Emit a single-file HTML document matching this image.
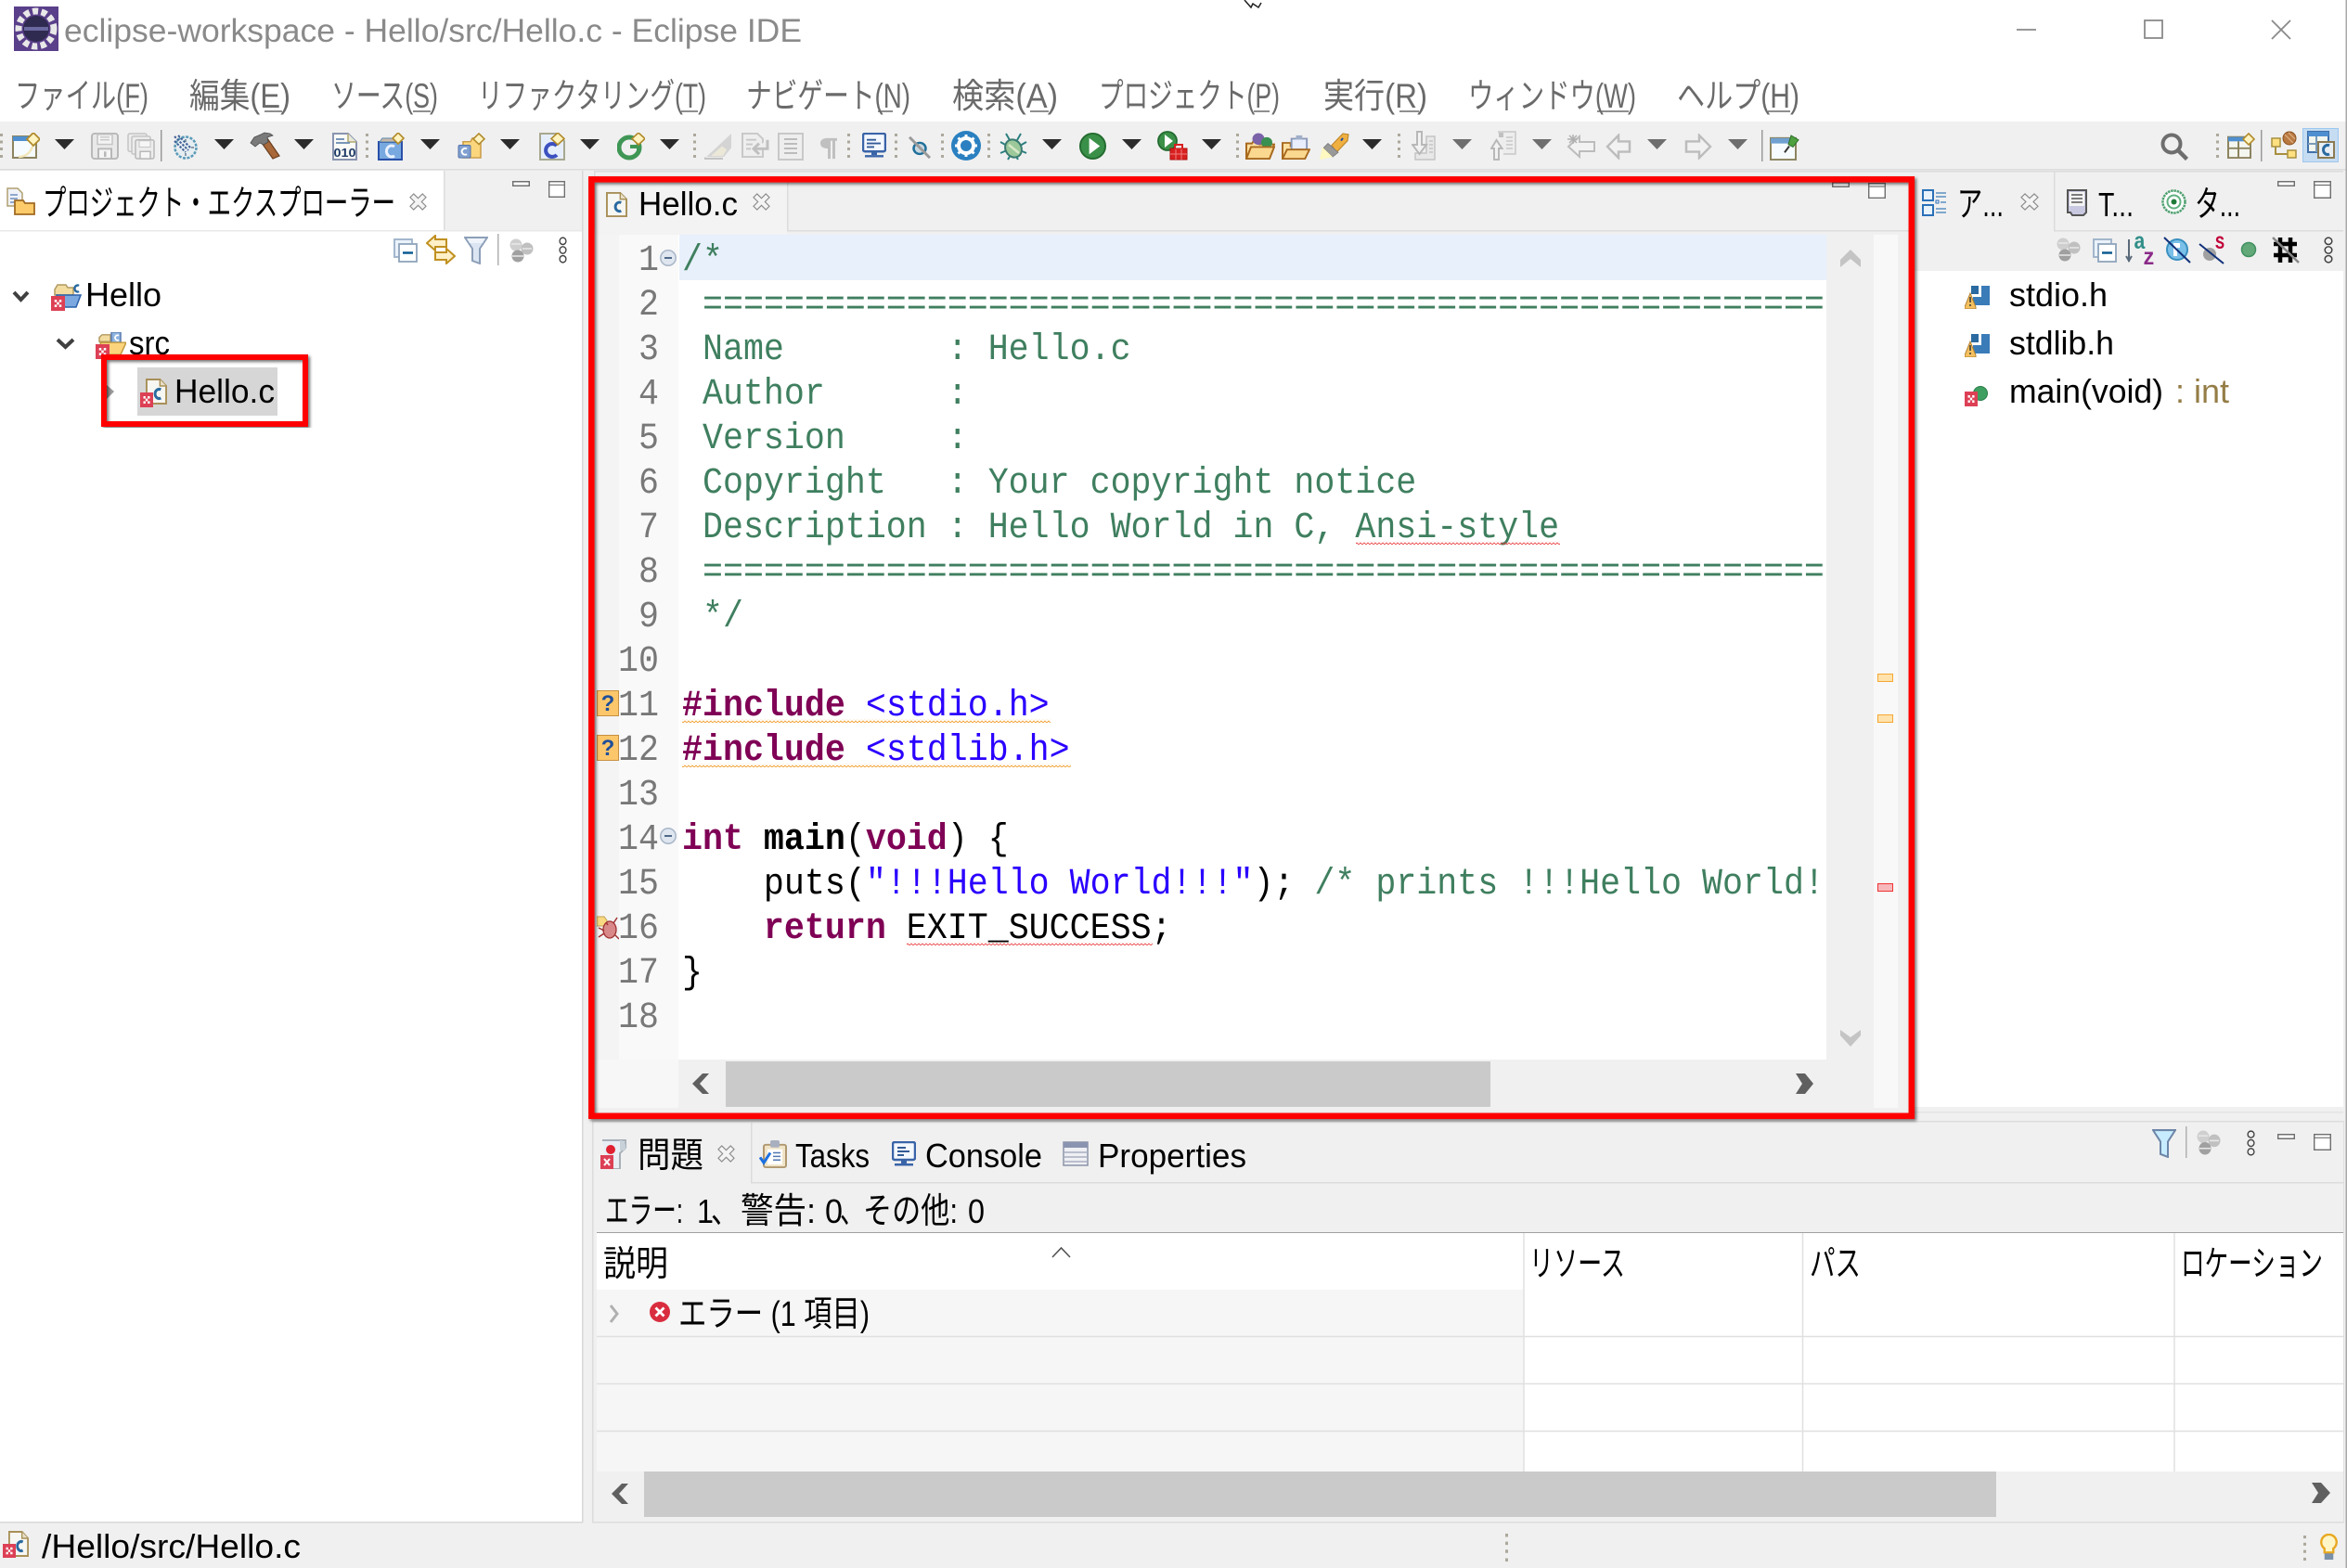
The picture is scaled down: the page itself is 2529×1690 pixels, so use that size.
<!DOCTYPE html>
<html lang="ja"><head><meta charset="utf-8"><title>eclipse-workspace - Hello/src/Hello.c - Eclipse IDE</title>
<style>
html,body{margin:0;padding:0;background:#f0f0f0}
svg{display:block}
.s{font-family:"Liberation Sans","Noto Sans CJK JP",sans-serif;font-size:36px;fill:#000}
.j{font-size:38px}
.m{font-family:"Liberation Mono","DejaVu Sans Mono",monospace;font-size:40px;white-space:pre}
.c{fill:#3f7f5f}.k{fill:#7f0055;font-weight:bold}.t{fill:#2a00ff}.b{fill:#000}.bb{fill:#000;font-weight:bold}
.menu{fill:#6a6a6a;font-size:37px}
.ln{fill:#787878;text-anchor:end}
</style></head><body>
<svg xmlns="http://www.w3.org/2000/svg" width="2529" height="1690" viewBox="0 0 2529 1690">
<defs>
<clipPath id="codeclip"><rect x="731" y="253" width="1235" height="889"/></clipPath>
<pattern id="sqo" width="4" height="4" patternUnits="userSpaceOnUse"><path d="M0 3L2 1L4 3" fill="none" stroke="#f0a030" stroke-width=".9"/></pattern>
<pattern id="sqr" width="4" height="4" patternUnits="userSpaceOnUse"><path d="M0 3L2 1L4 3" fill="none" stroke="#e83838" stroke-width=".8"/></pattern>
<filter id="sh" x="-5%" y="-5%" width="110%" height="110%"><feDropShadow dx="2" dy="2" stdDeviation="1.500" flood-color="#000" flood-opacity=".55"/></filter>
<path id="tb" d="M0 0h21l-10.500 11z" fill="#2b2b2b"/>
<path id="tg" d="M0 0h21l-10.500 11z" fill="#6e6e6e"/>
<symbol id="grip" viewBox="0 0 3 26" preserveAspectRatio="none"><path d="M0 0h3v3H0zM0 7.500h3v3H0zM0 15h3v3H0zM0 23h3v3H0z" fill="#aca89c"/></symbol>

<symbol id="i-new" viewBox="0 0 30 28" preserveAspectRatio="none"><rect x="1" y="4" width="25" height="23" fill="#f6fbff" stroke="#8c8460" stroke-width="2"/><rect x="1" y="4" width="25" height="5" fill="#4f8fd0"/><path d="M7 26c9 0 14-6 16-14" fill="none" stroke="#f2e6b8" stroke-width="2.500"/><path d="M23 0l7 7-7 7-7-7z" fill="#fff3c0" stroke="#b08a2a" stroke-width="1.800"/></symbol>
<symbol id="i-save" viewBox="0 0 30 30" preserveAspectRatio="none"><rect x="1" y="1" width="28" height="28" rx="3" fill="#e9e9e9" stroke="#b8b8b8" stroke-width="2"/><rect x="7" y="2" width="16" height="11" fill="#f3f3f3" stroke="#c4c4c4" stroke-width="1.500"/><path d="M10 5h10M10 8h10" stroke="#c8c8c8" stroke-width="1.500"/><rect x="8" y="18" width="14" height="11" fill="#f5f5f5" stroke="#b8b8b8" stroke-width="2"/><rect x="14" y="21" width="2.500" height="6" fill="#b8b8b8"/></symbol>
<symbol id="i-saveall" viewBox="0 0 30 30" preserveAspectRatio="none"><rect x="1" y="1" width="20" height="20" rx="2" fill="#ececec" stroke="#c4c4c4" stroke-width="1.500"/><rect x="5" y="4" width="20" height="20" rx="2" fill="#ececec" stroke="#c4c4c4" stroke-width="1.500"/><rect x="9" y="8" width="20" height="21" rx="2" fill="#ececec" stroke="#b8b8b8" stroke-width="1.500"/><rect x="13" y="9" width="12" height="7" fill="#f6f6f6" stroke="#c4c4c4"/><rect x="14" y="21" width="11" height="8" fill="#f6f6f6" stroke="#b8b8b8" stroke-width="1.500"/></symbol>
<symbol id="i-target" viewBox="0 0 26 28" preserveAspectRatio="none"><circle cx="13" cy="15" r="11.500" fill="#e6eef2" stroke="#5a9ab8" stroke-width="2.500" stroke-dasharray="3 1.500"/><path d="M1 3l15 15M5 2l14 14M1 8l12 12" stroke="#3e5f96" stroke-width="2" stroke-dasharray="2.500 1.500"/><path d="M13 6v3M22 15h-3M13 24v-3" stroke="#6a7f90" stroke-width="1.500"/></symbol>
<symbol id="i-hammer" viewBox="0 0 33 30" preserveAspectRatio="none"><path d="M13 12l12 17 7-3-13-19z" fill="#a9683a" stroke="#6a3f20" stroke-width="1.200"/><path d="M1 12l4-6 7-3 4-2 6 1 3 2-6 2 1 5-5 3-4-2-5 4z" fill="#7a7a7a" stroke="#4a4a4a" stroke-width=".8"/></symbol>
<symbol id="i-010" viewBox="0 0 27 30" preserveAspectRatio="none"><path d="M1 1h16l9 9v19H1z" fill="#fbfbf7" stroke="#8a94b0" stroke-width="2"/><path d="M17 1v9h9" fill="#e8e8d8" stroke="#b0a870" stroke-width="1.500"/><path d="M4 7h9M4 11h15" stroke="#6688b0" stroke-width="1.800"/><text x="1.500" y="26" font-family="Liberation Sans" font-weight="bold" font-size="13" fill="#1f3a66" textLength="24" lengthAdjust="spacingAndGlyphs">010</text></symbol>
<symbol id="i-cproj" viewBox="0 0 30 30" preserveAspectRatio="none"><path d="M1 10h25v19H1z" fill="#78a8e0" stroke="#2a50a8" stroke-width="2"/><path d="M2 10l3-4h16l3 4z" fill="#c8b8a8" stroke="#5a88b0"/><path d="M18 15a5.500 6 0 1 0 0 10" fill="none" stroke="#eaf2ff" stroke-width="3"/><path d="M22 0l6 6-6 6-6-6z" fill="#fff3c0" stroke="#b08a2a" stroke-width="1.600"/></symbol>
<symbol id="i-fold" viewBox="0 0 30 30" preserveAspectRatio="none"><path d="M6 10h8l2-4h9v22H6z" fill="#fbd67c" stroke="#c89a46" stroke-width="1.500"/><rect x="1" y="14" width="13" height="14" rx="1.500" fill="#80a0d0" stroke="#5070a8"/><path d="M10 18a3.500 3.500 0 1 0 0 6" fill="none" stroke="#fff" stroke-width="2"/><path d="M23 1l6 6-6 6-6-6z" fill="#fff3c0" stroke="#b08a2a" stroke-width="1.600"/></symbol>
<symbol id="i-cdoc" viewBox="0 0 28 30" preserveAspectRatio="none"><path d="M1 1h18l8 8v20H1z" fill="#e6eefc" stroke="#a8a890" stroke-width="2"/><path d="M19 14a7 7 0 1 0 0 10" fill="none" stroke="#3c50c0" stroke-width="4"/><path d="M20 0l7 6.500-7 6.500-7-6.500z" fill="#fff3c0" stroke="#b08a2a" stroke-width="1.600"/></symbol>
<symbol id="i-g" viewBox="0 0 30 30" preserveAspectRatio="none"><circle cx="13" cy="16" r="11" fill="none" stroke="#3f9655" stroke-width="5"/><path d="M14 15h9v4" fill="none" stroke="#3f9655" stroke-width="4"/><path d="M23 0l7 6.500-7 6.500-7-6.500z" fill="#fff3c0" stroke="#b08a2a" stroke-width="1.600"/></symbol>
<symbol id="i-gpen" viewBox="0 0 32 30" preserveAspectRatio="none"><path d="M1 29L30 1v16L22 27H1z" fill="#d4d4d4"/><path d="M8 26l12-11 5 4-4 7z" fill="#ece8d8"/><path d="M1 29h20" stroke="#b4b4b4" stroke-width="1.500"/></symbol>
<symbol id="i-gdoc" viewBox="0 0 30 28" preserveAspectRatio="none"><path d="M1 1h16l6 6v20H1z" fill="#eee" stroke="#c8c8c8" stroke-width="2"/><path d="M5 8h11M5 13h7M5 18h5" stroke="#c8c8c8" stroke-width="2"/><path d="M28 8v10H14m5-6l-6 6 6 6" fill="#eee" stroke="#c0c0c0" stroke-width="3"/></symbol>
<symbol id="i-glines" viewBox="0 0 28 30" preserveAspectRatio="none"><rect x="1" y="1" width="26" height="28" fill="#eee" stroke="#c8c8c8" stroke-width="2"/><path d="M7 7h14M7 12h14M7 17h14M7 22h14" stroke="#bcbcbc" stroke-width="2"/></symbol>
<symbol id="i-pil" viewBox="0 0 20 26" preserveAspectRatio="none"><path d="M8 1h11v3h-2v21h-3V4h-2v21H9V13C3 13 1 10 1 7c0-4 3-6 7-6z" fill="#c0c0c0"/></symbol>
<symbol id="i-mon" viewBox="0 0 26 28" preserveAspectRatio="none"><rect x="1" y="1" width="24" height="20" rx="2" fill="#f4f8ff" stroke="#3a64a8" stroke-width="2.500"/><path d="M5 8h10M5 12h15M5 16h8" stroke="#335b96" stroke-width="2"/><path d="M10 22h6v3h-6z" fill="#3a64a8"/><path d="M3 25h20v2.500H3z" fill="#3a64a8"/></symbol>
<symbol id="i-sx" viewBox="0 0 24 28" preserveAspectRatio="none"><circle cx="12" cy="15" r="6.500" fill="#c8d8e0" stroke="#1f6f9a" stroke-width="2.500"/><path d="M1 2l22 24" stroke="#9a9a9a" stroke-width="3"/></symbol>
<symbol id="i-gear" viewBox="0 0 32 32" preserveAspectRatio="none"><circle cx="16" cy="16" r="16" fill="#2a80c0"/><circle cx="16" cy="16" r="8" fill="none" stroke="#fff" stroke-width="4"/><path d="M16 4v6M16 22v6M4 16h6M22 16h6M7.500 7.500l4 4M20.500 20.500l4 4M24.500 7.500l-4 4M11.500 20.500l-4 4" stroke="#fff" stroke-width="3"/></symbol>
<symbol id="i-bug" viewBox="0 0 30 30" preserveAspectRatio="none"><path d="M7 1l4 7M23 1l-4 7M1 10l7 4M29 10l-7 4M1 22l7-3M29 22l-7-3M9 29l3-5M20 29l-3-5" stroke="#2c7f80" stroke-width="2" fill="none"/><ellipse cx="15" cy="17" rx="8.500" ry="10" fill="#9cc89a" stroke="#3a7a70" stroke-width="2" transform="rotate(-30 15 17)"/><path d="M10 13l11 9" stroke="#d8e8c8" stroke-width="2.500"/></symbol>
<symbol id="i-run" viewBox="0 0 30 30" preserveAspectRatio="none"><circle cx="15" cy="15" r="14" fill="#3a9048" stroke="#236b30" stroke-width="2"/><path d="M11 6l12 9-12 9z" fill="#fff"/></symbol>
<symbol id="i-runx" viewBox="0 0 33 32" preserveAspectRatio="none"><circle cx="11" cy="11" r="10" fill="#3a9048" stroke="#236b30" stroke-width="1.800"/><path d="M8 4l9 7-9 7z" fill="#fff"/><rect x="14" y="19" width="18" height="12" fill="#d82020" stroke="#b01010"/><rect x="19" y="15" width="8" height="5" fill="none" stroke="#d82020" stroke-width="2"/><path d="M14 25h18M20 20v11M26 20v11" stroke="#f08080" stroke-width="1"/></symbol>
<symbol id="i-f1" viewBox="0 0 32 30" preserveAspectRatio="none"><path d="M1 28V12h6l2-3h6v4h16l-5 15z" fill="#fde0a0" stroke="#a8691e" stroke-width="2"/><circle cx="14" cy="7" r="6.500" fill="#7a62a8"/><circle cx="23" cy="11" r="6" fill="#3a9050"/><path d="M1 29l5-13h25l-5 13z" fill="#fbd890" stroke="#a8691e" stroke-width="2"/></symbol>
<symbol id="i-f2" viewBox="0 0 32 30" preserveAspectRatio="none"><path d="M1 28V10h9v4h16v14z" fill="#fde0a0" stroke="#a8691e" stroke-width="2"/><rect x="11" y="5" width="17" height="13" fill="#e8eefc" stroke="#8a98b8" stroke-width="2"/><rect x="16" y="1" width="7" height="5" fill="#a0aec8"/><path d="M1 29l5-11h25l-5 11z" fill="#fbd890" stroke="#a8691e" stroke-width="2"/></symbol>
<symbol id="i-pen" viewBox="0 0 33 32" preserveAspectRatio="none"><path d="M14 15L26 2l6 1-1 7-12 13z" fill="#f0b040" stroke="#c08a30" stroke-width="1.200"/><path d="M10 13l11 10-6 5-10-10z" fill="#999" stroke="#777" stroke-width=".8"/><path d="M1 31l3-14 11 11z" fill="#fff8c0"/><path d="M24 10l2-3" stroke="#2a50a0" stroke-width="2"/></symbol>
<symbol id="i-nx" viewBox="0 0 26 32" preserveAspectRatio="none"><path d="M16 6h9v25H4v-7h12z" fill="#e8e8e8" stroke="#c4c4c4" stroke-width="1.500"/><path d="M19 11h4M19 15h4M19 19h4M19 23h4" stroke="#c4c4c4" stroke-width="1.500"/><path d="M6 1h5v14h5L8.500 25 1 15h5z" fill="#f2f2f2" stroke="#b8b8b8" stroke-width="2"/></symbol>
<symbol id="i-pv" viewBox="0 0 28 32" preserveAspectRatio="none"><path d="M8 1h19v24H14" fill="#ededed" stroke="#c8c8c8" stroke-width="1.500"/><path d="M17 7h7M17 11h7M17 15h7M17 19h7" stroke="#c8c8c8" stroke-width="1.500"/><rect x="9" y="2" width="5" height="5" fill="#c0c0c0"/><path d="M9 31h-5V19H1l5.500-9 6 9H9z" fill="#f2f2f2" stroke="#b8b8b8" stroke-width="2"/></symbol>
<symbol id="i-last" viewBox="0 0 32 28" preserveAspectRatio="none"><path d="M2 14L14 3v6h16v10H14v6z" fill="#f2f2f2" stroke="#bcbcbc" stroke-width="2"/><path d="M3 2l8 8M11 2l-8 8M7 1v10M1 6h11" stroke="#b0b0b0" stroke-width="1.500"/></symbol>
<symbol id="i-back" viewBox="0 0 28 30" preserveAspectRatio="none"><path d="M2 15L14 2v7h12v12H14v7z" fill="#f2f2f2" stroke="#bcbcbc" stroke-width="2.500"/></symbol>
<symbol id="i-fwd" viewBox="0 0 30 30" preserveAspectRatio="none"><path d="M28 15L16 2v7H2v12h14v7z" fill="#f2f2f2" stroke="#bcbcbc" stroke-width="2.500"/></symbol>
<symbol id="i-pin" viewBox="0 0 32 30" preserveAspectRatio="none"><rect x="1" y="5" width="27" height="24" fill="#f6fbff" stroke="#8c8460" stroke-width="2"/><rect x="1" y="5" width="27" height="6" fill="#6fa0d0"/><path d="M16 21l5-7" stroke="#333" stroke-width="2"/><path d="M20 12l3-10 8 5-6 8z" fill="#4ea040" stroke="#2c7028" stroke-width="1"/></symbol>
<symbol id="i-search" viewBox="0 0 30 30" preserveAspectRatio="none"><circle cx="12" cy="12" r="9.500" fill="none" stroke="#6e6e6e" stroke-width="4"/><path d="M19 19l9.500 9.500" stroke="#6e6e6e" stroke-width="4.500"/></symbol>
<symbol id="i-pers" viewBox="0 0 30 30" preserveAspectRatio="none"><rect x="1" y="5" width="24" height="24" fill="#f4f6f0" stroke="#8c8460" stroke-width="2"/><rect x="1" y="5" width="24" height="5" fill="#4f8fd0"/><path d="M1 18h24M12 10v19" stroke="#8c8460" stroke-width="2"/><path d="M23 1l6 6.500-6 6.500-6-6.500z" fill="#fff3c0" stroke="#b08a2a" stroke-width="1.600"/></symbol>
<symbol id="i-hier" viewBox="0 0 28 30" preserveAspectRatio="none"><rect x="1" y="8" width="9" height="9" fill="#ffe080" stroke="#a89040" stroke-width="1.500"/><rect x="18" y="21" width="9" height="8" fill="#ffe080" stroke="#a89040" stroke-width="1.500"/><path d="M5 17v8h13" fill="none" stroke="#a89040" stroke-width="2"/><ellipse cx="20" cy="8" rx="7" ry="7" fill="#b87840" stroke="#8a5020"/><path d="M15 4l9 9M19 2l7 7" stroke="#d8a878" stroke-width="1.500"/></symbol>
<symbol id="i-cpers" viewBox="0 0 30 30" preserveAspectRatio="none"><rect x="1" y="1" width="22" height="22" fill="#f4f6f0" stroke="#4070a8" stroke-width="2"/><rect x="1" y="1" width="22" height="5" fill="#4f8fd0"/><path d="M1 14h22M10 6v17" stroke="#7a9ab8" stroke-width="2"/><rect x="12" y="12" width="17" height="17" fill="#e8eef4" stroke="#8c7a50" stroke-width="2"/><path d="M24 16a4.500 5 0 1 0 0 9" fill="none" stroke="#2a6aa0" stroke-width="3"/></symbol>

<symbol id="x-close" viewBox="0 0 20 20" preserveAspectRatio="none"><path d="M5 1l5 5 5-5 4 4-5 5 5 5-4 4-5-5-5 5-4-4 5-5-5-5z" fill="#f4f4f4" stroke="#8a8a8a" stroke-width="1.200"/></symbol>
<symbol id="x-min" viewBox="0 0 20 6" preserveAspectRatio="none"><rect x=".75" y=".75" width="18.500" height="4.500" fill="#fff" stroke="#707070" stroke-width="1.500"/></symbol>
<symbol id="x-max" viewBox="0 0 20 19" preserveAspectRatio="none"><rect x=".75" y=".75" width="18.500" height="17.500" fill="#fff" stroke="#707070" stroke-width="1.500"/><path d="M1 4.500h18" stroke="#707070" stroke-width="1.200"/></symbol>
<symbol id="x-keb" viewBox="0 0 10 30" preserveAspectRatio="none"><circle cx="5" cy="5" r="3.800" fill="none" stroke="#404040" stroke-width="1.500"/><circle cx="5" cy="15" r="3.800" fill="none" stroke="#404040" stroke-width="1.500"/><circle cx="5" cy="25" r="3.800" fill="none" stroke="#404040" stroke-width="1.500"/></symbol>
<symbol id="x-db" viewBox="0 0 26 26" preserveAspectRatio="none"><circle cx="7" cy="7" r="6.500" fill="#cfcfcf"/><circle cx="19" cy="11" r="6.500" fill="#c0c0c0"/><circle cx="9" cy="19" r="6.500" fill="#a0a0a0"/><path d="M2 6h10M14 11h10M3 19h12" stroke="#e8e8e8" stroke-width="1.500"/></symbol>
<symbol id="x-coll" viewBox="0 0 26 26" preserveAspectRatio="none"><rect x="1" y="1" width="19" height="19" fill="#eaf2fa" stroke="#9ab0c8" stroke-width="1.800"/><rect x="6" y="6" width="19" height="19" fill="#fff" stroke="#8ea4bc" stroke-width="1.800"/><path d="M10 15.500h11" stroke="#0a5a90" stroke-width="2.500"/></symbol>
<symbol id="x-link" viewBox="0 0 32 32" preserveAspectRatio="none"><path d="M1 9l9-8v4h12v8H10v4z" fill="#fff0c8" stroke="#c09020" stroke-width="2"/><path d="M31 23l-9-8v4H10v8h12v4z" fill="#fff0c8" stroke="#c09020" stroke-width="2"/></symbol>
<symbol id="x-filt" viewBox="0 0 26 30" preserveAspectRatio="none"><path d="M1 1h24l-8 12v16l-8-3V13z" fill="#dce6f2" stroke="#8c9fb8" stroke-width="2"/><path d="M3 2h20l-3 5H6z" fill="#eef4fa"/></symbol>
<symbol id="x-filt2" viewBox="0 0 26 30" preserveAspectRatio="none"><path d="M1 1h24l-8 12v16l-8-3V13z" fill="#c8ecff" stroke="#6d86a8" stroke-width="2"/></symbol>
<symbol id="x-err" viewBox="0 0 12 12" preserveAspectRatio="none"><rect width="12" height="12" fill="#dd4055"/><path d="M3 3h2v2H3zM7 3h2v2H7zM5 5h2v2H5zM3 7h2v2H3zM7 7h2v2H7z" fill="#fff"/></symbol>
<symbol id="d-cfile" viewBox="0 0 24 28" preserveAspectRatio="none"><path d="M1 1h15l7 7v19H1z" fill="#f6f6f2" stroke="#a89058" stroke-width="2"/><path d="M16 1v7h7" fill="#e8e0c8" stroke="#a89058" stroke-width="1.500"/><path d="M17 12a4.500 5 0 1 0 0 9" fill="none" stroke="#2a6aa0" stroke-width="3"/></symbol>
<symbol id="d-proj" viewBox="0 0 32 30" preserveAspectRatio="none"><path d="M3 8l3-5h9l2 3h6v8H3z" fill="#f2dca0" stroke="#b09a60" stroke-width="1.500"/><path d="M5 14h26l-5 13H7z" fill="#7ca8e0" stroke="#2a60a8" stroke-width="1.500"/><path d="M29 4a3 3.500 0 1 0 0 6" fill="none" stroke="#2a6aa0" stroke-width="2.500"/></symbol>
<symbol id="d-src" viewBox="0 0 32 28" preserveAspectRatio="none"><path d="M3 6l3-3h9v8H3z" fill="#f2dca0" stroke="#b09a60" stroke-width="1.500"/><rect x="16" y="0" width="10" height="14" fill="#8eb4e0" stroke="#5a7ab0" stroke-width="1.500"/><path d="M24 4a2.500 3 0 1 0 0 5" fill="none" stroke="#fff" stroke-width="1.800"/><path d="M4 12h28l-6 14H8z" fill="#fbd47c" stroke="#c0983c" stroke-width="1.500"/></symbol>
<symbol id="d-hdr" viewBox="0 0 28 25" preserveAspectRatio="none"><path d="M7 0h8v9H7z" fill="#2a6aa0"/><path d="M18 0h9v21H9v-9h9z" fill="#3a7cb8"/><path d="M6 8L0 23v2h12v-2z" fill="#f4c060" stroke="#b08030"/><path d="M6 12v6M6 20v2" stroke="#333" stroke-width="1.500"/></symbol>
<symbol id="d-expl" viewBox="0 0 31 30" preserveAspectRatio="none"><path d="M1 1h11l5 5v14H1z" fill="#f0f2f8" stroke="#b0a070" stroke-width="1.500"/><path d="M4 8h8M4 12h8M4 16h8" stroke="#6f8fc0" stroke-width="1.500"/><path d="M9 14h9l2 3h10v12H9z" fill="#fdcb6a" stroke="#a06a22" stroke-width="1.800"/></symbol>
<symbol id="d-outl" viewBox="0 0 27 29" preserveAspectRatio="none"><rect x="1" y="1" width="11" height="11" fill="#e8f2fb" stroke="#2a70b8" stroke-width="2"/><rect x="1" y="17" width="11" height="11" fill="#e8f2fb" stroke="#2a70b8" stroke-width="2"/><rect x="15" y="12" width="3" height="3" fill="none" stroke="#2a70b8"/><path d="M15 4h11M15 8h11M20 14h6M15 21h11M15 25h11" stroke="#5a90c0" stroke-width="1.500"/></symbol>
<symbol id="d-task" viewBox="0 0 22 29" preserveAspectRatio="none"><path d="M1 1h20v24l-3 3H6l-2-3H1z" fill="#c8c8e0" stroke="#555" stroke-width="2"/><rect x="3" y="3" width="16" height="15" fill="#f4f4f4"/><path d="M5 6h12M5 10h12M5 14h12" stroke="#555" stroke-width="1.500"/></symbol>
<symbol id="d-targ" viewBox="0 0 27 27" preserveAspectRatio="none"><circle cx="13.500" cy="13.500" r="12" fill="#fff" stroke="#4fa070" stroke-width="2.500" stroke-dasharray="2.500 .8"/><circle cx="13.500" cy="13.500" r="7" fill="#fff" stroke="#60b080" stroke-width="2"/><circle cx="13.500" cy="13.500" r="3" fill="#1f7a3a"/></symbol>
<symbol id="d-prob" viewBox="0 0 29 32" preserveAspectRatio="none"><path d="M2 1h25v8l-6 6v17H8" fill="#e8eef4" stroke="#a8b0b8" stroke-width="2"/><circle cx="11" cy="11" r="5" fill="#e02030"/><rect x="0" y="17" width="14" height="15" fill="#dd4055"/><path d="M4 21l6 7M10 21l-6 7" stroke="#fff" stroke-width="2"/><path d="M21 1a6 6 0 0 1 6 6v5h-6z" fill="#c8d0d8"/></symbol>
<symbol id="d-tasks" viewBox="0 0 30 32" preserveAspectRatio="none"><rect x="5" y="6" width="24" height="25" rx="2" fill="#f0e4c8" stroke="#b09870" stroke-width="2"/><rect x="9" y="11" width="16" height="17" fill="#fff"/><rect x="12" y="1" width="10" height="8" rx="2" fill="#a8b0c0"/><path d="M15 15h8M15 19h8M15 23h8" stroke="#5078b0" stroke-width="1.500"/><path d="M1 20l4 6 7-11" fill="none" stroke="#1a70e0" stroke-width="3"/></symbol>
<symbol id="d-con" viewBox="0 0 26 27" preserveAspectRatio="none"><rect x="1" y="1" width="24" height="19" rx="2" fill="#f4f8ff" stroke="#3a64a8" stroke-width="2.500"/><path d="M6 7h9M6 11h13M6 15h7" stroke="#335b96" stroke-width="2"/><path d="M10 21h6v3h-6zM3 24h20v2.500H3z" fill="#3a64a8"/></symbol>
<symbol id="d-prop" viewBox="0 0 28 27" preserveAspectRatio="none"><rect x="1" y="1" width="26" height="25" fill="#eef0f4" stroke="#8a92a8" stroke-width="1.500"/><rect x="1" y="1" width="26" height="6" fill="#8a94b0"/><path d="M1 12h26M1 17h26M1 22h26" stroke="#a8aec0" stroke-width="1.500"/></symbol>
<symbol id="d-e" viewBox="0 0 22 22" preserveAspectRatio="none"><circle cx="11" cy="11" r="11" fill="#d92d3f"/><path d="M6.500 6.500l9 9M15.500 6.500l-9 9" stroke="#fff" stroke-width="2.800"/></symbol>
<symbol id="d-fold" viewBox="0 0 18 18" preserveAspectRatio="none"><circle cx="9" cy="9" r="8.200" fill="#dfe6ef" stroke="#a8b6c8" stroke-width="1.500"/><path d="M5 9h8" stroke="#4f6a8a" stroke-width="2"/></symbol>
<symbol id="d-q" viewBox="0 0 24 28" preserveAspectRatio="none"><rect x=".5" y=".5" width="23" height="27" fill="#fcc76a" stroke="#c89040"/><text x="12" y="22" text-anchor="middle" font-family="Liberation Sans" font-weight="bold" font-size="24" fill="#1f4f9a">?</text></symbol>
<symbol id="d-bug" viewBox="0 0 24 28" preserveAspectRatio="none"><path d="M0 2h8l3 4v6H0z" fill="#f8d880" stroke="#c0a050"/><ellipse cx="14" cy="16" rx="7" ry="9" fill="#d88888" stroke="#a03030" stroke-width="1.300"/><path d="M2 14l6 3M2 24l6-4M22 3l-4 6M24 26l-4-4M10 8l2 3" stroke="#a03030" stroke-width="1.500"/></symbol>
<symbol id="d-bulb" viewBox="0 0 20 30" preserveAspectRatio="none"><path d="M10 1a8.500 8.500 0 0 1 5 15.500V21H5v-4.500A8.500 8.500 0 0 1 10 1z" fill="#fff6c8" stroke="#e8a820" stroke-width="2.500"/><rect x="5" y="22" width="10" height="7" fill="#7a90a8"/></symbol>
</defs>

<!-- base -->
<rect width="2529" height="1690" fill="#f0f0f0"/>
<rect width="2529" height="131" fill="#fff"/>
<rect x="0" y="182" width="2529" height="1.500" fill="#dcdcdc"/>

<!-- title bar -->
<rect x="15" y="7" width="48" height="48" fill="#5a3f8a"/>
<circle cx="39" cy="31" r="19" fill="none" stroke="#e8e8e8" stroke-width="7" stroke-dasharray="6 3.500"/>
<circle cx="39" cy="31" r="14" fill="#2f2a50"/><path d="M26 31h26" stroke="#6a68a0" stroke-width="4"/>
<text class="s" x="69" y="45" style="font-size:35px;fill:#8a8a8a" textLength="795" lengthAdjust="spacingAndGlyphs">eclipse-workspace - Hello/src/Hello.c - Eclipse IDE</text>
<path d="M2173 32h21" stroke="#8a8a8a" stroke-width="1.800"/>
<rect x="2311" y="22" width="19" height="19" fill="none" stroke="#8a8a8a" stroke-width="1.800"/>
<path d="M2448 22l20 20M2468 22l-20 20" stroke="#8a8a8a" stroke-width="1.800"/>
<path d="M1341 0l7 8 2-4 6 4 3-5" fill="none" stroke="#222" stroke-width="1.500"/>

<!-- menu -->
<text class="s menu" x="16" y="116" textLength="144" lengthAdjust="spacingAndGlyphs">ファイル(F)</text>
<text class="s menu" x="204" y="116" textLength="109" lengthAdjust="spacingAndGlyphs">編集(E)</text>
<text class="s menu" x="357" y="116" textLength="115" lengthAdjust="spacingAndGlyphs">ソース(S)</text>
<text class="s menu" x="515" y="116" textLength="246" lengthAdjust="spacingAndGlyphs">リファクタリング(T)</text>
<text class="s menu" x="804" y="116" textLength="177" lengthAdjust="spacingAndGlyphs">ナビゲート(N)</text>
<text class="s menu" x="1026" y="116" textLength="114" lengthAdjust="spacingAndGlyphs">検索(A)</text>
<text class="s menu" x="1184" y="116" textLength="195" lengthAdjust="spacingAndGlyphs">プロジェクト(P)</text>
<text class="s menu" x="1426" y="116" textLength="112" lengthAdjust="spacingAndGlyphs">実行(R)</text>
<text class="s menu" x="1582" y="116" textLength="181" lengthAdjust="spacingAndGlyphs">ウィンドウ(W)</text>
<text class="s menu" x="1807" y="116" textLength="132" lengthAdjust="spacingAndGlyphs">ヘルプ(H)</text>
<path d="M132 120h18M285 120h19M445 120h19M734 120h18M946 120h16M1110 120h20M1351 120h17M1508 120h21M1721 120h34M1905 120h24" stroke="#6a6a6a" stroke-width="1.500"/>

<!-- toolbar -->
<use href="#grip" x="0" y="144" width="3" height="26"/>
<use href="#i-new" x="13" y="143" width="30" height="28"/><use href="#tb" x="59" y="150"/>
<use href="#i-save" x="98" y="143" width="30" height="29"/><use href="#i-saveall" x="137" y="143" width="30" height="29"/>
<rect x="173" y="140" width="1.500" height="34" fill="#9a9a9a"/>
<use href="#i-target" x="187" y="144" width="26" height="28"/><use href="#tb" x="231" y="150"/>
<use href="#i-hammer" x="269" y="142" width="33" height="30"/><use href="#tb" x="317" y="150"/>
<use href="#i-010" x="358" y="143" width="27" height="30"/>
<use href="#grip" x="394" y="144" width="3" height="26"/>
<use href="#i-cproj" x="407" y="143" width="30" height="30"/><use href="#tb" x="453" y="150"/>
<use href="#i-fold" x="493" y="143" width="30" height="29"/><use href="#tb" x="539" y="150"/>
<use href="#i-cdoc" x="581" y="143" width="28" height="30"/><use href="#tb" x="625" y="150"/>
<use href="#i-g" x="665" y="143" width="30" height="30"/><use href="#tb" x="711" y="150"/>
<use href="#grip" x="747" y="144" width="3" height="26"/>
<use href="#i-gpen" x="758" y="143" width="32" height="29"/>
<use href="#i-gdoc" x="799" y="143" width="30" height="27"/>
<use href="#i-glines" x="838" y="143" width="28" height="30"/>
<use href="#i-pil" x="883" y="148" width="20" height="24"/>
<use href="#grip" x="913" y="144" width="3" height="26"/>
<use href="#i-mon" x="929" y="143" width="26" height="27"/>
<use href="#grip" x="964" y="144" width="3" height="26"/>
<use href="#i-sx" x="979" y="146" width="24" height="26"/>
<use href="#grip" x="1014" y="144" width="3" height="26"/>
<use href="#i-gear" x="1025" y="141" width="32" height="32"/>
<use href="#grip" x="1064" y="144" width="3" height="26"/>
<use href="#i-bug" x="1077" y="143" width="30" height="30"/><use href="#tb" x="1123" y="150"/>
<use href="#i-run" x="1163" y="143" width="29" height="29"/><use href="#tb" x="1209" y="150"/>
<use href="#i-runx" x="1247" y="141" width="33" height="32"/><use href="#tb" x="1295" y="150"/>
<use href="#grip" x="1332" y="144" width="3" height="26"/>
<use href="#i-f1" x="1342" y="143" width="32" height="29"/>
<use href="#i-f2" x="1381" y="145" width="31" height="27"/>
<use href="#i-pen" x="1421" y="142" width="33" height="31"/><use href="#tb" x="1468" y="150"/>
<use href="#grip" x="1506" y="144" width="3" height="26"/>
<use href="#i-nx" x="1521" y="141" width="26" height="32"/><use href="#tg" x="1565" y="150"/>
<use href="#i-pv" x="1606" y="141" width="28" height="32"/><use href="#tg" x="1651" y="150"/>
<use href="#i-last" x="1688" y="144" width="32" height="28"/>
<use href="#i-back" x="1730" y="144" width="28" height="28"/><use href="#tg" x="1775" y="150"/>
<use href="#i-fwd" x="1815" y="144" width="30" height="28"/><use href="#tg" x="1862" y="150"/>
<rect x="1898" y="140" width="1.500" height="34" fill="#9a9a9a"/>
<use href="#i-pin" x="1907" y="144" width="32" height="29"/>
<use href="#i-search" x="2328" y="143" width="30" height="30"/>
<use href="#grip" x="2388" y="144" width="3" height="26"/>
<use href="#i-pers" x="2400" y="143" width="30" height="28"/>
<rect x="2436" y="140" width="1.500" height="34" fill="#9a9a9a"/>
<use href="#i-hier" x="2447" y="141" width="28" height="30"/>
<rect x="2481.500" y="138.500" width="38" height="36" fill="#c5dcf2" stroke="#9cc8f0"/>
<use href="#i-cpers" x="2486" y="141" width="30" height="30"/>

<!-- left panel -->
<rect x="0" y="184" width="628" height="1457" fill="#fff"/>
<rect x="478" y="184" width="149" height="64" fill="#f0f0f0"/>
<rect x="478" y="184" width="1.500" height="64" fill="#dcdcdc"/>
<rect x="0" y="248" width="627" height="1.500" fill="#e8e8e8"/>
<rect x="627" y="184" width="1.500" height="1457" fill="#d8d8d8"/>
<rect x="0" y="1640" width="628" height="1.500" fill="#d8d8d8"/>
<use href="#d-expl" x="7" y="202" width="31" height="30"/>
<text class="s j" x="46" y="232" textLength="380" lengthAdjust="spacingAndGlyphs">プロジェクト・エクスプローラー</text>
<use href="#x-close" x="441" y="208" width="19" height="19"/>
<use href="#x-min" x="552" y="195" width="19" height="6"/><use href="#x-max" x="591" y="195" width="18" height="18"/>
<use href="#x-coll" x="424" y="257" width="26" height="26"/>
<use href="#x-link" x="459" y="253" width="32" height="32"/>
<use href="#x-filt" x="500" y="255" width="26" height="30"/>
<rect x="536" y="252" width="1.500" height="34" fill="#b0b0b0"/>
<use href="#x-db" x="549" y="257" width="26" height="26"/>
<use href="#x-keb" x="602" y="255" width="9" height="29"/>
<path d="M15 315l7.500 8 7.500-8" fill="none" stroke="#404040" stroke-width="4"/>
<use href="#d-proj" x="56" y="304" width="32" height="30"/><use href="#x-err" x="55" y="319" width="15" height="16"/>
<text class="s" x="92" y="330" textLength="82" lengthAdjust="spacingAndGlyphs">Hello</text>
<path d="M62 366l8.500 8 8.500-8" fill="none" stroke="#404040" stroke-width="4"/>
<use href="#d-src" x="104" y="358" width="32" height="26"/><use href="#x-err" x="103" y="371" width="15" height="16"/>
<text class="s" x="139" y="382" textLength="44" lengthAdjust="spacingAndGlyphs">src</text>
<rect x="148" y="396" width="151" height="52" fill="#d6d6d6"/>
<path d="M115 415l8 7-8 8" fill="#9a9a9a"/>
<use href="#d-cfile" x="157" y="408" width="23" height="28"/><use href="#x-err" x="151" y="423" width="14" height="16"/>
<text class="s" x="188" y="434" textLength="108" lengthAdjust="spacingAndGlyphs">Hello.c</text>

<!-- editor -->
<rect x="640" y="184" width="1420" height="1022" fill="#f0f0f0"/>
<rect x="640" y="184" width="1.500" height="64" fill="#dcdcdc"/>
<rect x="640" y="184" width="1420" height="1.500" fill="#dcdcdc"/>
<rect x="641" y="196" width="207" height="57" fill="#f3f3f3"/>
<rect x="848" y="196" width="1.500" height="52" fill="#dcdcdc"/>
<rect x="848" y="248" width="1210" height="1.500" fill="#dcdcdc"/>
<use href="#d-cfile" x="653" y="207" width="23" height="27"/>
<text class="s" x="688" y="232" textLength="107" lengthAdjust="spacingAndGlyphs">Hello.c</text>
<use href="#x-close" x="811" y="208" width="19" height="19"/>
<use href="#x-min" x="1974" y="196" width="19" height="6"/><use href="#x-max" x="2013" y="197" width="19" height="17"/>
<rect x="641" y="253" width="26" height="889" fill="#f4f4f4"/>
<rect x="667" y="253" width="64" height="889" fill="#f9f9f9"/>
<rect x="731" y="253" width="1237" height="889" fill="#fff"/>
<rect x="732" y="253" width="1236" height="49" fill="#e7f0fb"/>
<rect x="641" y="1142" width="90" height="52" fill="#f7f7f7"/>
<rect x="2019" y="253" width="26" height="941" fill="#f8f8f8"/>
<rect x="782" y="1144" width="824" height="49" fill="#cacaca"/>
<path d="M764 1157l-10 11 10 11h-7l-11-11 11-11z" fill="#606060"/>
<path d="M1935 1157l10 0 9 11-9 11h-10l7-11z" fill="#606060"/>
<path d="M1983 288v-8l11-11 11 11v8l-11-9z" fill="#c4c4c4"/>
<path d="M1983 1110l11 8 11-8v6l-11 12-11-12z" fill="#c4c4c4"/>
<rect x="2023.500" y="726.500" width="16" height="8" fill="#ffe2ac" stroke="#f5a733"/>
<rect x="2023.500" y="770.500" width="16" height="8" fill="#ffe2ac" stroke="#f5a733"/>
<rect x="2023.500" y="952.500" width="16" height="8" fill="#f7b8bc" stroke="#e33"/>

<g transform="translate(710,0) scale(.916,1)" class="m">
<text class="m ln" y="291">1</text><text class="m ln" y="339">2</text><text class="m ln" y="387">3</text><text class="m ln" y="435">4</text><text class="m ln" y="483">5</text><text class="m ln" y="531">6</text><text class="m ln" y="579">7</text><text class="m ln" y="627">8</text><text class="m ln" y="675">9</text><text class="m ln" y="723">10</text><text class="m ln" y="771">11</text><text class="m ln" y="819">12</text><text class="m ln" y="867">13</text><text class="m ln" y="915">14</text><text class="m ln" y="963">15</text><text class="m ln" y="1011">16</text><text class="m ln" y="1059">17</text><text class="m ln" y="1107">18</text>
</g>
<use href="#d-fold" x="711" y="269" width="18" height="18"/>
<use href="#d-fold" x="711" y="892" width="18" height="18"/>
<use href="#d-q" x="643" y="744" width="24" height="28"/>
<use href="#d-q" x="643" y="792" width="24" height="28"/>
<use href="#d-bug" x="643" y="986" width="24" height="28"/>

<g clip-path="url(#codeclip)">
<g transform="translate(735,0) scale(.916,1)">
<text class="m c" y="291">/*</text>
<text class="m c" y="339"> ============================================================</text>
<text class="m c" y="387"> Name        : Hello.c</text>
<text class="m c" y="435"> Author      : </text>
<text class="m c" y="483"> Version     : </text>
<text class="m c" y="531"> Copyright   : Your copyright notice</text>
<text class="m c" y="579"> Description : Hello World in C, Ansi-style</text>
<text class="m c" y="627"> ============================================================</text>
<text class="m c" y="675"> */</text>
<text class="m" y="771"><tspan class="k">#include</tspan><tspan class="t"> &lt;stdio.h&gt;</tspan></text>
<text class="m" y="819"><tspan class="k">#include</tspan><tspan class="t"> &lt;stdlib.h&gt;</tspan></text>
<text class="m" y="915"><tspan class="k">int</tspan><tspan class="b"> </tspan><tspan class="bb">main</tspan><tspan class="b">(</tspan><tspan class="k">void</tspan><tspan class="b">) {</tspan></text>
<text class="m" y="963"><tspan class="b">    puts(</tspan><tspan class="t">"!!!Hello World!!!"</tspan><tspan class="b">); </tspan><tspan class="c">/* prints !!!Hello World!!! */</tspan></text>
<text class="m" y="1011"><tspan class="k">    return</tspan><tspan class="b"> EXIT_SUCCESS;</tspan></text>
<text class="m b" y="1059">}</text>
</g>
<rect x="735" y="775" width="397" height="4" fill="url(#sqo)"/>
<rect x="735" y="823" width="419" height="4" fill="url(#sqo)"/>
<rect x="977" y="1015" width="265" height="4" fill="url(#sqr)"/>
<rect x="1461" y="583" width="220" height="4" fill="url(#sqr)"/>
</g>

<!-- right panel -->
<rect x="2059" y="184" width="466" height="108" fill="#f0f0f0"/>
<rect x="2059" y="184" width="466" height="1.500" fill="#dcdcdc"/>
<rect x="2213" y="184" width="1.500" height="64" fill="#dcdcdc"/>
<rect x="2213" y="248" width="312" height="1.500" fill="#dcdcdc"/>
<rect x="2063" y="292" width="462" height="901" fill="#fff"/>
<use href="#d-outl" x="2071" y="204" width="27" height="29"/>
<text class="s j" x="2109" y="233" textLength="50" lengthAdjust="spacingAndGlyphs">ア...</text>
<use href="#x-close" x="2177" y="208" width="20" height="19"/>
<use href="#d-task" x="2227" y="204" width="22" height="29"/>
<text class="s" x="2261" y="233" textLength="38" lengthAdjust="spacingAndGlyphs">T...</text>
<use href="#d-targ" x="2329" y="204" width="27" height="27"/>
<text class="s j" x="2365" y="233" textLength="49" lengthAdjust="spacingAndGlyphs">タ...</text>
<use href="#x-min" x="2454" y="195" width="19" height="6"/><use href="#x-max" x="2493" y="195" width="19" height="19"/>
<use href="#x-db" x="2216" y="256" width="26" height="26"/>
<use href="#x-coll" x="2255" y="257" width="26" height="26"/>
<path d="M2294 258v24m-3-6l3 5 3-5" fill="none" stroke="#5a6a7a" stroke-width="2"/>
<text x="2299" y="268" font-family="Liberation Mono" font-weight="bold" font-size="25" fill="#2f8f88" textLength="13" lengthAdjust="spacingAndGlyphs">a</text>
<text x="2309" y="285" font-family="Liberation Mono" font-weight="bold" font-size="25" fill="#8a2a88" textLength="13" lengthAdjust="spacingAndGlyphs">z</text>
<circle cx="2346" cy="269" r="11" fill="#7ac0e8" stroke="#3a90c0" stroke-width="2"/><path d="M2342 262h7v5h-3v9h-4z" fill="#fff"/>
<path d="M2332 256l28 27" stroke="#10307a" stroke-width="2"/>
<circle cx="2381" cy="274" r="7" fill="#a0a0a0"/><path d="M2370 263l26 21" stroke="#10307a" stroke-width="2"/>
<text x="2387" y="268" font-family="Liberation Mono" font-weight="bold" font-size="20" fill="#c00038" textLength="10" lengthAdjust="spacingAndGlyphs">S</text>
<circle cx="2423" cy="269" r="7.500" fill="#63a878" stroke="#3f9060" stroke-width="1.500"/>
<path d="M2450 263h25M2450 275h25M2457 256v27M2468 256v27" stroke="#000" stroke-width="4.500"/><path d="M2449 256l28 27" stroke="#888" stroke-width="2.500"/>
<use href="#x-keb" x="2504" y="255" width="10" height="29"/>
<use href="#d-hdr" x="2117" y="308" width="28" height="25"/>
<text class="s" x="2165" y="330" textLength="106" lengthAdjust="spacingAndGlyphs">stdio.h</text>
<use href="#d-hdr" x="2117" y="360" width="28" height="25"/>
<text class="s" x="2165" y="382" textLength="113" lengthAdjust="spacingAndGlyphs">stdlib.h</text>
<circle cx="2134" cy="424" r="7.500" fill="#3f9f60" stroke="#2a7a48"/><use href="#x-err" x="2117" y="422" width="14" height="16"/>
<text class="s" x="2165" y="434" textLength="166" lengthAdjust="spacingAndGlyphs">main(void)</text>
<text class="s" x="2344" y="434" textLength="58" lengthAdjust="spacingAndGlyphs" style="font-size:36px;fill:#957d47">: int</text>

<!-- sash under editor/right -->
<rect x="2063" y="1198" width="462" height="1.500" fill="#e4e4e4"/>
<rect x="638" y="1208" width="1887" height="1.500" fill="#dcdcdc"/>

<!-- bottom panel -->
<rect x="638" y="1208" width="1.500" height="433" fill="#dcdcdc"/>
<rect x="2525" y="1208" width="1" height="433" fill="#e0e0e0"/>
<rect x="809" y="1210" width="1.500" height="64" fill="#dcdcdc"/>
<rect x="809" y="1274" width="1716" height="1.500" fill="#dcdcdc"/>
<use href="#d-prob" x="647" y="1228" width="29" height="32"/>
<text class="s j" x="687" y="1258" textLength="71" lengthAdjust="spacingAndGlyphs">問題</text>
<use href="#x-close" x="773" y="1234" width="19" height="19"/>
<use href="#d-tasks" x="818" y="1228" width="30" height="31"/>
<text class="s" x="857" y="1258" textLength="80" lengthAdjust="spacingAndGlyphs">Tasks</text>
<use href="#d-con" x="961" y="1230" width="26" height="27"/>
<text class="s" x="997" y="1258" textLength="126" lengthAdjust="spacingAndGlyphs">Console</text>
<use href="#d-prop" x="1145" y="1230" width="28" height="27"/>
<text class="s" x="1183" y="1258" textLength="160" lengthAdjust="spacingAndGlyphs">Properties</text>
<use href="#x-filt2" x="2319" y="1217" width="26" height="31"/>
<rect x="2355" y="1214" width="1.500" height="34" fill="#b0b0b0"/>
<use href="#x-db" x="2367" y="1218" width="26" height="27"/>
<use href="#x-keb" x="2421" y="1218" width="9" height="28"/>
<use href="#x-min" x="2454" y="1222" width="19" height="6"/>
<use href="#x-max" x="2493" y="1222" width="19" height="18"/>
<text class="s j" x="652" y="1318" textLength="84" lengthAdjust="spacingAndGlyphs">エラー:</text>
<text class="s" x="751" y="1318" textLength="18" lengthAdjust="spacingAndGlyphs">1</text>
<text class="s j" x="766" y="1318" textLength="30" lengthAdjust="spacingAndGlyphs">、</text>
<text class="s j" x="798" y="1318" textLength="81" lengthAdjust="spacingAndGlyphs">警告:</text>
<text class="s" x="889" y="1318" textLength="19" lengthAdjust="spacingAndGlyphs">0</text>
<text class="s j" x="905" y="1318" textLength="26" lengthAdjust="spacingAndGlyphs">、</text>
<text class="s j" x="930" y="1318" textLength="102" lengthAdjust="spacingAndGlyphs">その他:</text>
<text class="s" x="1043" y="1318" textLength="18" lengthAdjust="spacingAndGlyphs">0</text>
<rect x="643" y="1328" width="1882" height="1.500" fill="#a0a0a0"/>
<rect x="643" y="1329" width="1882" height="257" fill="#fff"/>
<rect x="643" y="1390" width="999" height="196" fill="#f6f6f6"/>
<path d="M643 1440.500h1882M643 1491.500h1882M643 1542.500h1882" stroke="#e0e0e0" stroke-width="1.500"/>
<path d="M1642 1329v257M1942.500 1329v257M2343 1329v257" stroke="#e0e0e0" stroke-width="1.500"/>
<text class="s j" x="650" y="1375" textLength="70" lengthAdjust="spacingAndGlyphs">説明</text>
<path d="M1134 1355l9.500-10 9.500 10" fill="none" stroke="#505050" stroke-width="1.500"/>
<text class="s j" x="1648" y="1375" textLength="103" lengthAdjust="spacingAndGlyphs">リソース</text>
<text class="s j" x="1950" y="1375" textLength="55" lengthAdjust="spacingAndGlyphs">パス</text>
<text class="s j" x="2350" y="1375" textLength="153" lengthAdjust="spacingAndGlyphs">ロケーション</text>
<path d="M658 1407l7 9-7 9" fill="none" stroke="#b0b0b0" stroke-width="3"/>
<use href="#d-e" x="700" y="1403" width="22" height="22"/>
<text class="s j" x="731" y="1429" textLength="206" lengthAdjust="spacingAndGlyphs">エラー (1 項目)</text>
<rect x="643" y="1586" width="1882" height="50" fill="#f0f0f0"/>
<rect x="694" y="1586" width="1457" height="49" fill="#cacaca"/>
<path d="M677 1599l-10 11 10 11h-7l-11-11 11-11z" fill="#606060"/>
<path d="M2491 1598l10 0 10 11-10 11h-10l7-11z" fill="#606060"/>
<rect x="638" y="1640" width="1888" height="1.500" fill="#dcdcdc"/>

<!-- status bar -->
<use href="#d-cfile" x="9" y="1650" width="22" height="28"/><use href="#x-err" x="3" y="1664" width="14" height="15"/>
<text class="s" x="45" y="1679" textLength="279" lengthAdjust="spacingAndGlyphs">/Hello/src/Hello.c</text>
<use href="#grip" x="1622" y="1653" width="3" height="30"/>
<use href="#grip" x="2482" y="1655" width="3" height="27"/>
<use href="#d-bulb" x="2500" y="1653" width="19" height="29"/>

<!-- window edge -->
<rect x="2527.500" y="0" width="1.500" height="1690" fill="#a8a8a8"/>

<!-- red annotations -->
<rect x="637.300" y="193.300" width="1422.500" height="1009.500" fill="none" stroke="#ff0000" stroke-width="6.500" filter="url(#sh)"/>
<rect x="112" y="385" width="217" height="72" fill="none" stroke="#ff0000" stroke-width="6" filter="url(#sh)"/>
</svg>
</body></html>
